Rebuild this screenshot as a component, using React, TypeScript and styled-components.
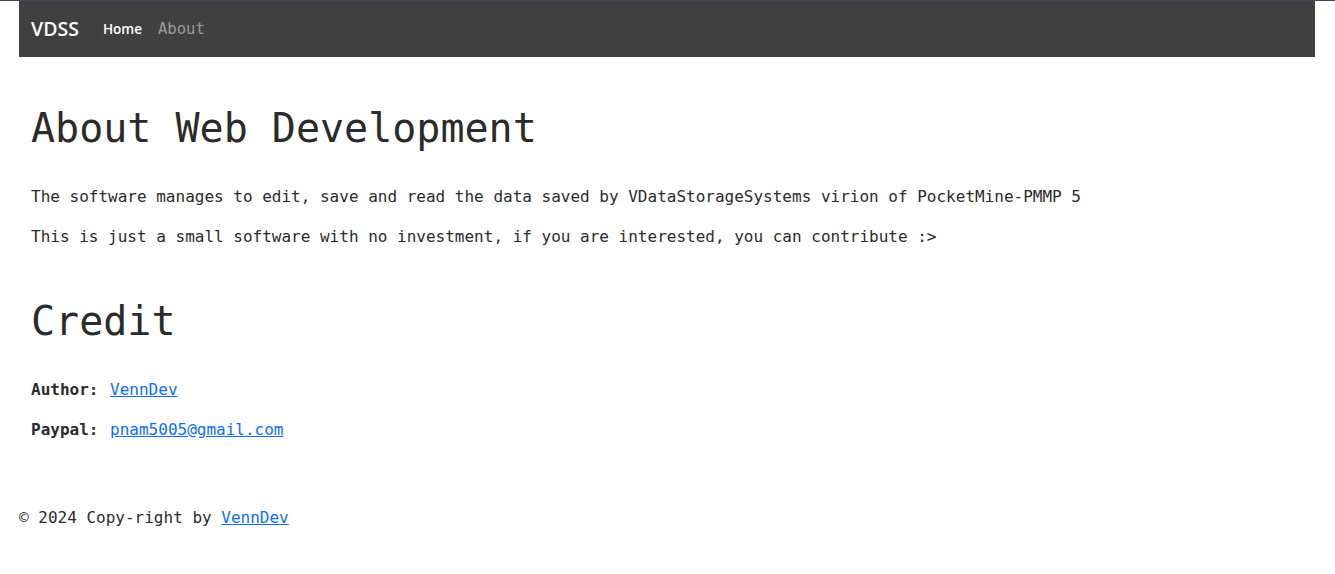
import React from "react";
import styled, { createGlobalStyle } from "styled-components";

const GlobalStyle = createGlobalStyle`
  html, body {
    margin: 0;
    padding: 0;
    background: #ffffff;
  }
  body {
    border-top: 1px solid #3b4860;
    font-family: "DejaVu Sans Mono", "Liberation Mono", monospace;
    color: #2b2b2b;
  }
`;

const Page = styled.div`
  display: flex;
  flex-direction: column;
  padding: 0 20px 0 19px;
`;

const NavBar = styled.nav`
  display: flex;
  align-items: center;
  height: 56px;
  padding: 0 12px;
  background: #404040;
`;

const Brand = styled.a`
  font-family: "Open Sans", "Noto Sans", sans-serif;
  font-size: 19.5px;
  font-weight: 600;
  color: #ffffff;
  text-decoration: none;
  margin-right: 24px;
  line-height: 1;
`;

const NavLinks = styled.div`
  display: flex;
  align-items: center;
  gap: 16px;
  padding-top: 2px;
`;

const NavLink = styled.a<{ $active?: boolean }>`
  font-family: ${(p) =>
    p.$active
      ? `"Open Sans", "Noto Sans", sans-serif`
      : `"DejaVu Sans Mono", "Liberation Mono", monospace`};
  font-size: ${(p) => (p.$active ? "13.5px" : "15.6px")};
  font-weight: ${(p) => (p.$active ? 600 : 400)};
  color: ${(p) => (p.$active ? "#ffffff" : "#9b9b9b")};
  text-decoration: none;
  line-height: 1;
`;

const Main = styled.main`
  display: flex;
  flex-direction: column;
  gap: 48px;
  padding: 47px 12px 0;
`;

const Section = styled.section`
  display: flex;
  flex-direction: column;
  gap: 16px;
`;

const Heading = styled.h1`
  margin: 0 0 17px;
  font-size: 40px;
  line-height: 48px;
  font-weight: 400;
  color: #2b2b2b;
`;

const Paragraph = styled.p`
  margin: 0;
  font-size: 16px;
  line-height: 24px;
  color: #2b2b2b;
`;

const Label = styled.strong`
  font-weight: 700;
  margin-right: 2px;
`;

const Link = styled.a`
  color: #0d6efd;
  text-decoration: underline;
`;

const Footer = styled.footer`
  margin-top: 64px;
  font-size: 16px;
  line-height: 24px;
  color: #2b2b2b;
`;

export default function App() {
  return (
    <>
      <GlobalStyle />
      <Page>
        <NavBar>
          <Brand href="#">VDSS</Brand>
          <NavLinks>
            <NavLink href="#" $active>
              Home
            </NavLink>
            <NavLink href="#">About</NavLink>
          </NavLinks>
        </NavBar>
        <Main>
          <Section>
            <Heading>About Web Development</Heading>
            <Paragraph>
              The software manages to edit, save and read the data saved by
              VDataStorageSystems virion of PocketMine-PMMP 5
            </Paragraph>
            <Paragraph>
              This is just a small software with no investment, if you are
              interested, you can contribute :&gt;
            </Paragraph>
          </Section>
          <Section>
            <Heading>Credit</Heading>
            <Paragraph>
              <Label>Author:</Label> <Link href="#">VennDev</Link>
            </Paragraph>
            <Paragraph>
              <Label>Paypal:</Label> <Link href="#">pnam5005@gmail.com</Link>
            </Paragraph>
          </Section>
        </Main>
        <Footer>
          © 2024 Copy-right by <Link href="#">VennDev</Link>
        </Footer>
      </Page>
    </>
  );
}
